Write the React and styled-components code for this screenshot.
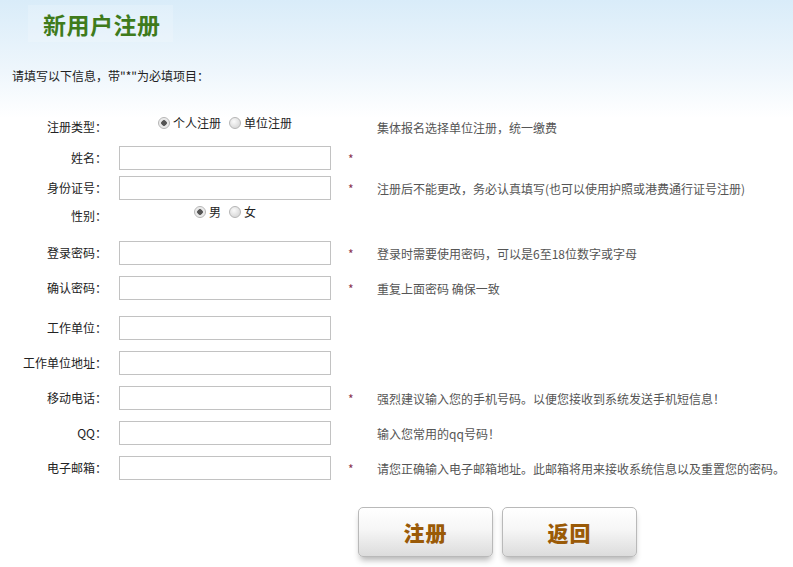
import React from "react";
import styled, { createGlobalStyle } from "styled-components";

const GlobalStyle = createGlobalStyle`
  html, body {
    margin: 0;
    padding: 0;
  }
  body {
    font-family: "Noto Sans CJK SC", "Liberation Sans", sans-serif;
    font-size: 12px;
    color: #333;
    background: linear-gradient(to bottom, #d9ecf9 0px, #eef6fc 70px, #ffffff 118px) no-repeat;
    background-color: #fff;
    min-height: 567px;
  }
`;

const Page = styled.div`
  width: 793px;
  height: 567px;
  overflow: hidden;
  display: flex;
  flex-direction: column;
`;

const TitleBox = styled.div`
  align-self: flex-start;
  margin: 5px 0 0 28px;
  padding: 4px 12px 0 15px;
  height: 33px;
  background: rgba(255, 255, 255, 0.18);
`;

const Title = styled.h1`
  margin: 0;
  font-size: 23px;
  line-height: 30px;
  font-weight: bold;
  color: #3f7b1c;
  letter-spacing: 0.5px;
`;

const Intro = styled.p`
  margin: 26px 0 0 12px;
  line-height: 16px;
  color: #222;
`;

const Form = styled.form`
  display: flex;
  flex-direction: column;
`;

const Row = styled.div`
  display: flex;
  align-items: center;
  height: 24px;
  margin-top: ${(p) => p.$mt}px;
`;

const Label = styled.label`
  width: 107px;
  flex-shrink: 0;
  text-align: right;
  color: #222;
  line-height: 16px;
`;

const Field = styled.div`
  width: 212px;
  margin-left: 12px;
  flex-shrink: 0;
`;

const TextInput = styled.input`
  display: block;
  box-sizing: border-box;
  width: 212px;
  height: 24px;
  margin: 0;
  border: 1px solid #c2c2c2;
  background: #fff;
  outline: none;
`;

const RadioGroup = styled.div`
  align-self: flex-start;
  display: flex;
  justify-content: center;
  align-items: center;
  gap: 8px;
  height: 16px;
`;

const RadioItem = styled.span`
  display: inline-flex;
  align-items: center;
  gap: 3px;
  color: #222;
  line-height: 16px;
`;

const RadioDot = styled.span`
  display: inline-block;
  box-sizing: border-box;
  width: 12px;
  height: 12px;
  border-radius: 50%;
  border: 1px solid #b5b5b5;
  background: ${(p) =>
    p.$checked
      ? "radial-gradient(circle, #555 0, #555 2.5px, #e4e4e4 3px, #f4f4f4 6px)"
      : "radial-gradient(circle at 40% 35%, #fafafa 0, #dcdcdc 6px)"};
`;

const Star = styled.span`
  width: 46px;
  flex-shrink: 0;
  padding-left: 17px;
  box-sizing: border-box;
  color: #8a3550;
  font-size: 12px;
`;

const Hint = styled.span`
  color: #555;
  white-space: nowrap;
`;

const Buttons = styled.div`
  display: flex;
  gap: 9px;
  margin: 27px 0 0 358px;
`;

const Button = styled.button`
  box-sizing: border-box;
  width: 135px;
  height: 50px;
  border: 1px solid #b9b9b9;
  border-radius: 5px;
  background: linear-gradient(to bottom, #ffffff 0%, #f6f6f6 45%, #dcdcdc 100%);
  box-shadow: 0 5px 6px -2px rgba(0, 0, 0, 0.3);
  font-family: "Noto Sans CJK SC", sans-serif;
  font-size: 21px;
  font-weight: 900;
  color: #9a5a07;
  letter-spacing: 1px;
  cursor: pointer;
  padding: 0;
`;

const rows = [
  { label: "姓名：", mt: 7, star: true },
  { label: "身份证号：", mt: 6, star: true, hint: "注册后不能更改，务必认真填写(也可以使用护照或港费通行证号注册)" },
];

const rows2 = [
  { label: "登录密码：", mt: 13, star: true, hint: "登录时需要使用密码，可以是6至18位数字或字母", type: "password" },
  { label: "确认密码：", mt: 11, star: true, hint: "重复上面密码 确保一致", type: "password" },
  { label: "工作单位：", mt: 16 },
  { label: "工作单位地址：", mt: 11 },
  { label: "移动电话：", mt: 11, star: true, hint: "强烈建议输入您的手机号码。以便您接收到系统发送手机短信息！" },
  { label: "QQ：", mt: 11, hint: "输入您常用的qq号码！" },
  { label: "电子邮箱：", mt: 11, star: true, hint: "请您正确输入电子邮箱地址。此邮箱将用来接收系统信息以及重置您的密码。" },
];

function InputRow({ label, mt, star, hint, type }) {
  return (
    <Row $mt={mt}>
      <Label>{label}</Label>
      <Field>
        <TextInput type={type || "text"} />
      </Field>
      <Star>{star ? "*" : ""}</Star>
      {hint && <Hint>{hint}</Hint>}
    </Row>
  );
}

function App() {
  return (
    <Page>
      <GlobalStyle />
      <TitleBox>
        <Title>新用户注册</Title>
      </TitleBox>
      <Intro>请填写以下信息，带"*"为必填项目：</Intro>
      <Form onSubmit={(e) => e.preventDefault()}>
        <Row $mt={31}>
          <Label>注册类型：</Label>
          <Field as={RadioGroup}>
            <RadioItem>
              <RadioDot $checked />
              个人注册
            </RadioItem>
            <RadioItem>
              <RadioDot />
              单位注册
            </RadioItem>
          </Field>
          <Star />
          <Hint>集体报名选择单位注册，统一缴费</Hint>
        </Row>
        {rows.map((r) => (
          <InputRow key={r.label} {...r} />
        ))}
        <Row $mt={4}>
          <Label>性别：</Label>
          <Field as={RadioGroup}>
            <RadioItem>
              <RadioDot $checked />
              男
            </RadioItem>
            <RadioItem>
              <RadioDot />
              女
            </RadioItem>
          </Field>
        </Row>
        {rows2.map((r) => (
          <InputRow key={r.label} {...r} />
        ))}
        <Buttons>
          <Button type="submit">注册</Button>
          <Button type="button">返回</Button>
        </Buttons>
      </Form>
    </Page>
  );
}

export default App;
